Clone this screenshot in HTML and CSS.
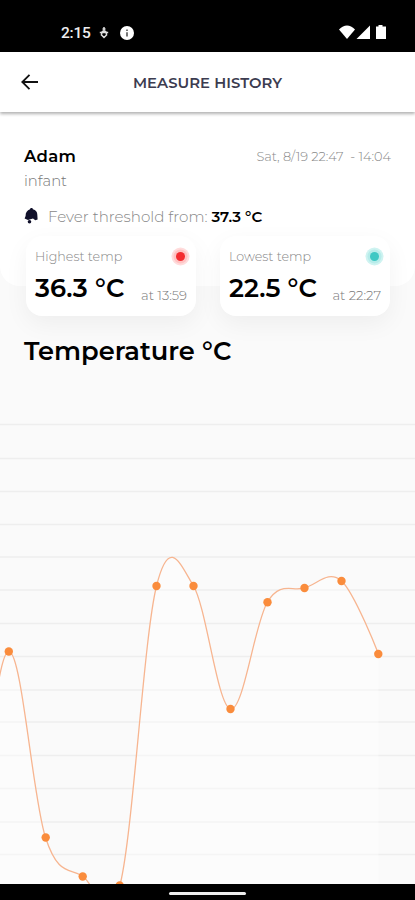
FILE: index.html
```html
<!doctype html>
<html lang="en">
  <head>
    <meta charset="UTF-8" />
    <meta name="viewport" content="width=device-width, initial-scale=1.0" />
    <title>Measure history</title>
    <link rel="stylesheet" href="styles.css">
  </head>
  <body>
    <div class="screen">
      <div class="status-bar">
        <span class="clock">2:15</span>
        <svg class="icon-debug" viewBox="0 0 10 12">
          <path d="M5 0v4M.8 5.500h8.400M2 7.500 5 10.500 8 7.500M3.500 2h3M2.500 7.500Q2.500 4 5 4t2.500 3.500" fill="none" stroke="#ddd" stroke-width="1.500" />
        </svg>
        <svg class="icon-info" viewBox="0 0 14 14">
          <circle cx="7" cy="7" r="7" fill="#fff" />
          <path d="M7 3.500v1.600M7 6.300v4.200" stroke="#555" stroke-width="1.600" />
        </svg>
        <svg class="icon-signal" viewBox="0 0 48 15" fill="#fff">
          <path d="M0 4.500Q8-3.500 16 4.500L8 14z" />
          <path d="M17.500 14 31 .5V14z" />
          <path d="M39.500 0h4v1.500H47V14H37V1.500h2.500z" />
        </svg>
      </div>

      <header class="app-bar">
        <svg class="back" viewBox="0 0 18 16" fill="none" stroke="#111" stroke-width="1.800">
          <path d="M17 8H1.500M8.500.8 1.300 8l7.200 7.200" />
        </svg>
        <h1>MEASURE HISTORY</h1>
      </header>

      <main>
        <section class="summary">
          <div class="person">
            <span class="name">Adam</span>
            <span class="date">Sat, 8/19 22:47 &nbsp;- 14:04</span>
          </div>
          <div class="group">infant</div>
          <div class="threshold">
            <svg class="bell" viewBox="0 0 14 16" fill="#10102a">
              <path d="M7.500 0c.8 0 1.300.5 1.400 1.200C11.800 2 13.300 4 13.300 6.500l.3 5-2.300.8L9 10.500 4 12 .6 10.500 1.600 8C1.500 4.500 3.200 2 6 1.200 6.200.5 6.700 0 7.500 0z" />
              <circle cx="5.500" cy="13.800" r="1.800" />
            </svg>
            <span class="threshold-label">Fever threshold from:</span>
            <b>37.3 °C</b>
          </div>
        </section>

        <section class="cards">
          <div class="card">
            <div class="card-row">
              <span class="label">Highest temp</span>
              <i class="dot dot-high"></i>
            </div>
            <div class="card-row">
              <span class="value">36.3 °C</span>
              <span class="time">at 13:59</span>
            </div>
          </div>
          <div class="card">
            <div class="card-row">
              <span class="label">Lowest temp</span>
              <i class="dot dot-low"></i>
            </div>
            <div class="card-row">
              <span class="value">22.5 °C</span>
              <span class="time">at 22:27</span>
            </div>
          </div>
        </section>

        <h2>Temperature °C</h2>

        <svg class="chart" viewBox="0 400 415 484">
          <path class="grid" d="M0 424.500h415M0 458.500h415M0 491.500h415M0 524.500h415M0 557h415M0 590h415M0 623.500h415M0 656.500h415M0 690h415M0 722h415M0 755.500h415M0 788.500h415M0 822h415M0 854.500h415" />
          <path class="area" d="M-28 830C-15 810-4 650.200 9 651.500C22 652.800 32.600 798.200 45.500 837.500C58.400 876.800 69.500 867.700 82.500 876C95.500 884.300 107 935.800 120 885C133 834.200 143.600 638 156.500 586C169.400 534 180.500 564.500 193.500 586C206.500 607.500 217.500 706.200 230.500 709C243.500 711.800 254.500 623.200 267.500 602C280.500 580.800 291.500 591.700 304.500 588C317.500 584.300 328.500 569.400 341.500 581C354.500 592.600 378.500 654 378.500 654V900H-28z" />
          <path class="line" d="M-28 830C-15 810-4 650.200 9 651.500C22 652.800 32.600 798.200 45.500 837.500C58.400 876.800 69.500 867.700 82.500 876C95.500 884.300 107 935.800 120 885C133 834.200 143.600 638 156.500 586C169.400 534 180.500 564.500 193.500 586C206.500 607.500 217.500 706.200 230.500 709C243.500 711.800 254.500 623.200 267.500 602C280.500 580.800 291.500 591.700 304.500 588C317.500 584.300 328.500 569.400 341.500 581C354.500 592.600 378.500 654 378.500 654" />
          <g class="points">
            <circle cx="8.800" cy="651.500" r="4.200" />
            <circle cx="45.700" cy="837.500" r="4.200" />
            <circle cx="82.700" cy="876.500" r="4.200" />
            <circle cx="119.700" cy="885.500" r="4.200" />
            <circle cx="156.500" cy="586" r="4.200" />
            <circle cx="193.500" cy="586" r="4.200" />
            <circle cx="230.500" cy="709" r="4.200" />
            <circle cx="267.500" cy="602.300" r="4.200" />
            <circle cx="304.500" cy="588" r="4.200" />
            <circle cx="341.500" cy="581" r="4.200" />
            <circle cx="378.300" cy="654" r="4.200" />
          </g>
        </svg>
      </main>

      <div class="nav-bar"><span class="handle"></span></div>
    </div>
  </body>
</html>
```
FILE: styles.css
```css
* {
  margin: 0;
  padding: 0;
  box-sizing: border-box;
}

body {
  font-family: Montserrat, Inter, 'Open Sans', sans-serif;
  background: #fafafa;
  color: #000;
}

.screen {
  display: flex;
  flex-direction: column;
  height: 900px;
  width: 415px;
  overflow: hidden;
}

svg {
  display: block;
  flex: none;
}

.status-bar {
  display: flex;
  align-items: center;
  height: 52px;
  flex: none;
  padding: 13px 28px 0 61px;
  background: #000;
  color: #eee;
}

.clock {
  font: 500 15.5px/18px Roboto, sans-serif;
  letter-spacing: -0.2px;
  width: 38px;
}

.icon-debug {
  width: 10px;
  height: 12px;
}

.icon-info {
  width: 14px;
  height: 14px;
  margin-left: 11px;
}

.icon-signal {
  width: 48px;
  height: 15px;
  margin-left: auto;
}

.app-bar {
  display: grid;
  grid-template-columns: 18px 1fr 18px;
  align-items: center;
  height: 60px;
  flex: none;
  padding: 0 21px;
  background: #fff;
  box-shadow: 0 2px 3px rgba(0, 0, 0, 0.3);
  z-index: 1;
}

.back {
  width: 18px;
  height: 16px;
}

h1 {
  font-size: 14.8px;
  font-weight: 600;
  letter-spacing: 0.05px;
  text-align: center;
  color: #3c3c50;
  padding-top: 2px;
}

main {
  flex: 1;
  min-height: 0;
}

.summary {
  height: 174px;
  padding: 34px 24px 0;
  background: #fff;
  border-radius: 0 0 20px 20px;
}

.person {
  display: flex;
  justify-content: space-between;
  align-items: center;
  height: 20px;
}

.name {
  font-size: 16.5px;
  font-weight: 600;
  letter-spacing: 0.3px;
}

.date {
  font-size: 12.9px;
  font-weight: 300;
  color: #888;
}

.group {
  font-size: 14.8px;
  font-weight: 300;
  line-height: 20px;
  margin-top: 5px;
  color: #777;
}

.threshold {
  display: flex;
  align-items: center;
  height: 20px;
  margin-top: 15px;
  font-size: 15.1px;
}

.threshold b {
  font-weight: 600;
  font-size: 15px;
  margin-left: 4px;
}

.threshold-label {
  font-weight: 300;
  color: #888;
}

.bell {
  width: 14px;
  height: 16px;
  margin-right: 10px;
}

.cards {
  display: flex;
  gap: 24px;
  padding: 0 25px 0 26px;
  margin-top: -50px;
}

.card {
  flex: 1;
  height: 80px;
  padding: 10px 8px 0 9px;
  background: #fff;
  border-radius: 16px;
  box-shadow: 0 8px 24px rgba(0, 0, 0, 0.05);
}

.card-row {
  display: flex;
  justify-content: space-between;
  align-items: center;
}

.card-row:first-child {
  height: 21px;
}

.card-row:last-child {
  height: 40px;
}

.label {
  font-size: 12.7px;
  font-weight: 300;
  color: #888;
}

.value {
  font-size: 25.7px;
  font-weight: 600;
}

.time {
  font-size: 13.1px;
  font-weight: 300;
  color: #777;
  padding: 16px 1px 0 0;
}

.dot {
  width: 9px;
  height: 9px;
  border-radius: 50%;
  margin-right: 3px;
}

.dot-high {
  background: #f42c30;
  box-shadow: 0 0 0 2.5px #ffc3c3, 0 0 0 4.5px #ffdcdc;
}

.dot-low {
  background: #3fc8c4;
  box-shadow: 0 0 0 2.5px #b6ecea, 0 0 0 4.5px #cff3f1;
}

h2 {
  font-size: 25.7px;
  font-weight: 600;
  line-height: 30px;
  padding-left: 24px;
  margin-top: 20px;
}

.chart {
  width: 415px;
  height: 484px;
  margin-top: 34px;
}

.grid {
  stroke: #eee;
  stroke-width: 1.5;
}

.area {
  fill: #fff;
  opacity: 0.4;
}

.line {
  fill: none;
  stroke: #f7b590;
  stroke-width: 1.3;
}

.points {
  fill: #fa8c3c;
}

.nav-bar {
  display: flex;
  justify-content: center;
  align-items: center;
  height: 16px;
  flex: none;
  background: #000;
  z-index: 1;
}

.handle {
  width: 77px;
  height: 3px;
  margin-top: 2px;
  border-radius: 2px;
  background: #eee;
}
```
